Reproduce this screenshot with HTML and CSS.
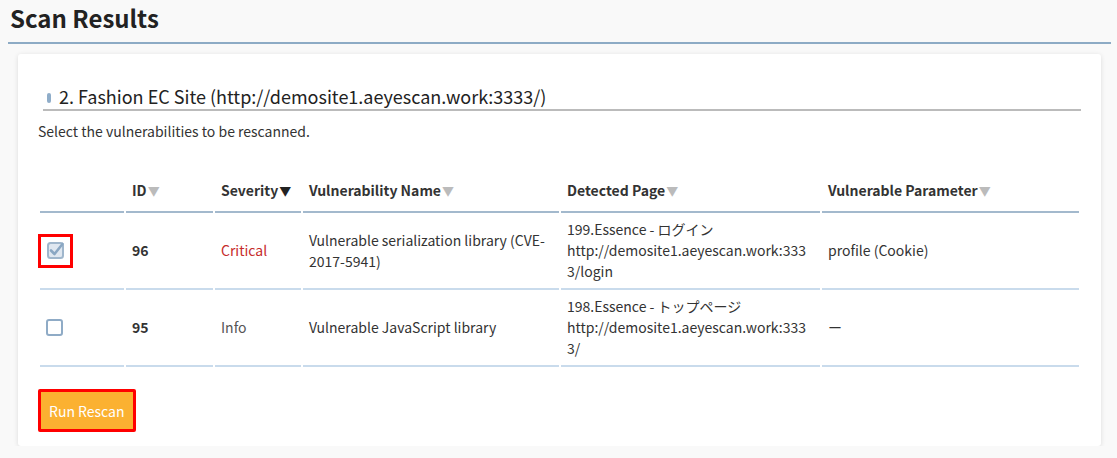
FILE: index.html
```html
<!DOCTYPE html>
<html lang="en">
<head>
    <meta charset="UTF-8">
    <meta name="viewport" content="width=device-width, initial-scale=1.0">
    <title>Scan Results</title>
    <link rel="stylesheet" href="styles.css">
</head>
<body>
    <div class="wrap">
        <h1 class="pageTitle">Scan Results</h1>

        <div class="card">
            <h2 class="siteTitle"><span class="bar"></span>2. Fashion EC Site (http://demosite1.aeyescan.work:3333/)</h2>
            <p class="note">Select the vulnerabilities to be rescanned.</p>

            <table class="results">
                <colgroup>
                    <col class="cCheck">
                    <col class="cId">
                    <col class="cSev">
                    <col class="cName">
                    <col class="cPage">
                    <col class="cParam">
                </colgroup>
                <thead>
                    <tr>
                        <th></th>
                        <th>ID<span class="sort">▼</span></th>
                        <th>Severity<span class="sort active">▼</span></th>
                        <th>Vulnerability Name<span class="sort">▼</span></th>
                        <th>Detected Page<span class="sort">▼</span></th>
                        <th>Vulnerable Parameter<span class="sort">▼</span></th>
                    </tr>
                </thead>
                <tbody>
                    <tr>
                        <td>
                            <span class="mark">
                                <svg class="check" width="17" height="17" viewBox="0 0 17 17">
                                    <rect x="1" y="1" width="15" height="15" rx="2.5" fill="#dfe7f0" stroke="#9fb6cc" stroke-width="2"/>
                                    <path d="M4 8.5 L7.5 12 L15.5 2" fill="none" stroke="#8aa7c3" stroke-width="2.6" stroke-linecap="round" stroke-linejoin="round"/>
                                </svg>
                            </span>
                        </td>
                        <td class="id">96</td>
                        <td class="critical">Critical</td>
                        <td>Vulnerable serialization library (CVE-2017-5941)</td>
                        <td class="detected">199.Essence - ログイン<br>http://demosite1.aeyescan.work:3333/login</td>
                        <td>profile (Cookie)</td>
                    </tr>
                    <tr>
                        <td>
                            <span class="box"></span>
                        </td>
                        <td class="id">95</td>
                        <td class="info">Info</td>
                        <td>Vulnerable JavaScript library</td>
                        <td class="detected">198.Essence - トップページ<br>http://demosite1.aeyescan.work:3333/</td>
                        <td>ー</td>
                    </tr>
                </tbody>
            </table>

            <button class="rescan">Run Rescan</button>
        </div>
    </div>
</body>
</html>
```

FILE: styles.css
```css
body {
    margin: 0;
    background: #f9f9f9;
    font-family: "Noto Sans CJK JP", "Noto Sans", sans-serif;
    color: #333;
}

.wrap {
    padding: 0 6px 0 8px;
}

.pageTitle {
    margin: 0;
    font-size: 24px;
    line-height: 36px;
    font-weight: bold;
    color: #222;
    padding: 0 0 6px 2px;
    border-bottom: 2px solid #8dabc5;
}

.card {
    margin: 10px 10px 0;
    padding: 29px 20px 14px;
    background: white;
    border-radius: 3px;
    box-shadow: 0 1px 5px rgba(0, 0, 0, 0.12);
}

.siteTitle {
    margin: 0 0 0 5px;
    padding-left: 4px;
    font-size: 18px;
    font-weight: normal;
    line-height: 26px;
    color: #222;
    border-bottom: 2px solid #bbb;
}

.bar {
    display: inline-block;
    width: 4px;
    height: 10px;
    margin-right: 8px;
    border-radius: 2px;
    background: #8fadc9;
    vertical-align: 1px;
}

.note {
    margin: 10px 0 0;
    font-size: 14px;
    line-height: 21px;
}

.results {
    margin-top: 28px;
    width: 1043px;
    border-collapse: separate;
    border-spacing: 2px 0;
    table-layout: fixed;
    font-size: 14px;
    line-height: 21px;
}

.cCheck { width: 84px; }
.cId { width: 87px; }
.cSev { width: 86px; }
.cName { width: 256px; }
.cPage { width: 259px; }
.cParam { width: 257px; }

.results th {
    text-align: left;
    font-weight: bold;
    padding: 10px 6px;
    border-bottom: 2px solid #a3b9cd;
    white-space: nowrap;
}

.sort {
    font-size: 12px;
    color: #bbb;
    margin-left: 1px;
}

.sort.active {
    color: #222;
}

.results td {
    padding: 6px 6px;
    border-bottom: 2px solid #c9dbec;
    vertical-align: middle;
}

.id {
    padding-left: 7px;
    font-weight: bold;
}

.critical {
    color: #c62b2b;
}

.info {
    color: #555;
}

.detected {
    word-break: break-all;
}

.mark {
    display: inline-block;
    margin-left: -8px;
    padding: 5px 6px 6px;
    border: 3px solid #f00;
    line-height: 0;
}

.check {
    overflow: visible;
}

.box {
    display: block;
    width: 13px;
    height: 13px;
    border: 2px solid #8fabc6;
    border-radius: 3px;
    background: white;
}

.rescan {
    margin-top: 22px;
    height: 43px;
    padding: 0 8px;
    border: 3px solid #f00;
    border-radius: 2px;
    background: #fbb131;
    color: white;
    font-family: inherit;
    font-size: 14px;
}
```
